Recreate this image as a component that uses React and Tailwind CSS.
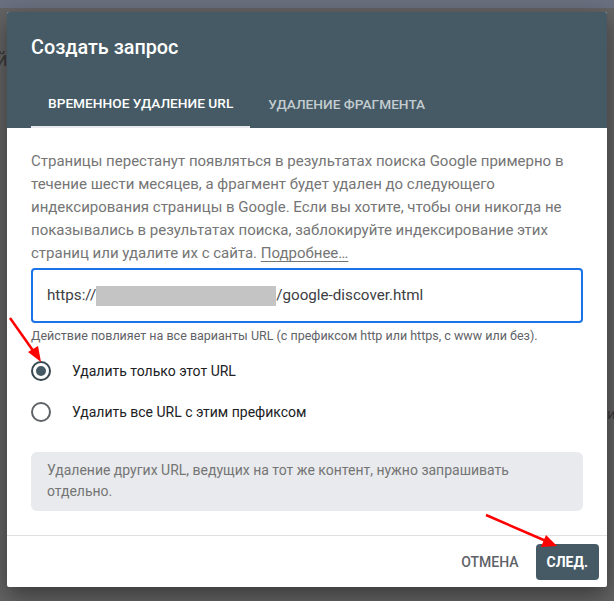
import React from "react";

export default function App() {
  return (
    <div
      className="relative w-[614px] h-[601px] overflow-hidden bg-[#646464]"
      style={{ fontFamily: "Roboto, 'Noto Sans', Arial, sans-serif" }}
    >
      <div className="h-[8px] bg-[#6b7080]" />
      <span className="absolute left-[-4px] top-[44px] text-[20px] text-[#3a3a3a]">й</span>
      <span className="absolute left-[607px] top-[403px] text-[15px] text-[#3a3a3a]">и</span>

      <div className="relative ml-[7px] mt-[4px] w-[600px] h-[575px] bg-white rounded-[2px] shadow-[0_8px_24px_rgba(0,0,0,0.45)] flex flex-col overflow-hidden">
        {/* Header */}
        <div className="bg-[#455a64] h-[116px] flex flex-col">
          <div className="pl-[24px] pt-[22px] h-[68px] text-[19.8px] leading-[28px] font-medium text-white">
            Создать запрос
          </div>
          <div className="flex pl-[24px] h-[48px]">
            <div className="px-[17px] flex items-center text-[13.7px] font-medium text-white border-b-[2px] border-[#e8eaed] pt-[1px]">
              ВРЕМЕННОЕ УДАЛЕНИЕ URL
            </div>
            <div className="px-[18px] flex items-center text-[13.7px] font-medium text-[#c3ccd0] pt-[1px]">
              УДАЛЕНИЕ ФРАГМЕНТА
            </div>
          </div>
        </div>

        {/* Body */}
        <div className="flex-1 px-[24px] pt-[22px]">
          <p className="text-[15px] leading-[23px] text-[#757575]">
            Страницы перестанут появляться в результатах поиска Google примерно в
            <br />
            течение шести месяцев, а фрагмент будет удален до следующего
            <br />
            индексирования страницы в Google. Если вы хотите, чтобы они никогда не
            <br />
            показывались в результатах поиска, заблокируйте индексирование этих
            <br />
            страниц или удалите их с сайта.{" "}
            <span className="underline underline-offset-[3px]">Подробнее…</span>
          </p>

          <div className="mt-[3px] h-[55px] border-[2px] border-[#1a73e8] rounded-[4px] flex items-center pl-[14px] text-[15.2px] text-[#3c4043]">
            <span>https://</span>
            <span className="inline-block w-[180px] h-[20px] bg-[#c4c4c4]" />
            <span>/google-discover.html</span>
          </div>

          <div className="mt-[5px] text-[12.5px] leading-[16px] text-[#5f6368]">
            Действие повлияет на все варианты URL (с префиксом http или https, с www или без).
          </div>

          <div className="mt-[17px] flex items-center h-[20px]">
            <div className="w-[20px] h-[20px] rounded-full border-[2px] border-[#37474f] flex items-center justify-center">
              <div className="w-[10px] h-[10px] rounded-full bg-[#455a64]" />
            </div>
            <span className="ml-[21px] text-[14px] text-[#202124]">Удалить только этот URL</span>
          </div>

          <div className="mt-[21px] flex items-center h-[20px]">
            <div className="w-[20px] h-[20px] rounded-full border-[2px] border-[#5f6368]" />
            <span className="ml-[21px] text-[14px] text-[#202124]">Удалить все URL с этим префиксом</span>
          </div>

          <div className="mt-[30px] bg-[#e8eaed] rounded-[6px] px-[16px] pt-[8px] pb-[9px] text-[14px] leading-[21px] text-[#757575]">
            Удаление других URL, ведущих на тот же контент, нужно запрашивать
            <br />
            отдельно.
          </div>
        </div>

        {/* Footer */}
        <div className="border-t border-[#e0e0e0] h-[52px] flex items-start justify-end pt-[8px] pr-[8px]">
          <button className="h-[36px] px-[8px] text-[14px] font-medium text-[#5f6368]">
            ОТМЕНА
          </button>
          <button className="ml-[9px] h-[36px] px-[11px] rounded-[4px] bg-[#455a64] text-[14px] font-bold text-white">
            СЛЕД.
          </button>
        </div>
      </div>

      {/* Red arrows */}
      <svg className="absolute left-0 top-0 pointer-events-none" width="614" height="601">
        <line x1="10" y1="318" x2="34" y2="352" stroke="#ff0000" strokeWidth="2.5" />
        <polygon points="41,362 28,352 38,346" fill="#ff0000" />
        <line x1="486" y1="515" x2="546" y2="541" stroke="#ff0000" strokeWidth="2.5" />
        <polygon points="557,546 541,547 546,535" fill="#ff0000" />
      </svg>
    </div>
  );
}
